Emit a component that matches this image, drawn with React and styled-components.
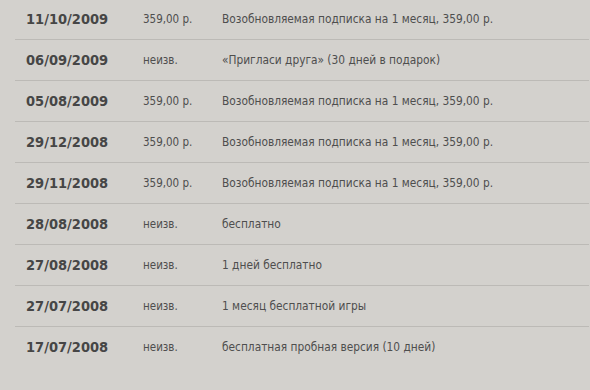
import React from "react";
import styled, { createGlobalStyle } from "styled-components";

const Global = createGlobalStyle`
  html, body { margin: 0; padding: 0; background: #d3d1cd; }
  body { font-family: "DejaVu Sans Condensed", "DejaVu Sans", sans-serif; }
`;

const List = styled.div`
  margin: -1px 1px 0 15px;
`;

const Row = styled.div`
  display: grid;
  grid-template-columns: 117px 79px 1fr;
  align-items: center;
  height: 40px;
  padding-left: 11px;
  border-bottom: 1px solid ${(p) => (p.$last ? "transparent" : "#bcbab6")};
`;

const DateCell = styled.div`
  font-weight: bold;
  font-size: 14.5px;
  color: #464646;
`;

const Price = styled.div`
  font-size: 11.5px;
  color: #4e4e4e;
`;

const Desc = styled.div`
  font-size: 11.8px;
  color: #4e4e4e;
`;

const rows = [
  ["11/10/2009", "359,00 р.", "Возобновляемая подписка на 1 месяц, 359,00 р."],
  ["06/09/2009", "неизв.", "«Пригласи друга» (30 дней в подарок)"],
  ["05/08/2009", "359,00 р.", "Возобновляемая подписка на 1 месяц, 359,00 р."],
  ["29/12/2008", "359,00 р.", "Возобновляемая подписка на 1 месяц, 359,00 р."],
  ["29/11/2008", "359,00 р.", "Возобновляемая подписка на 1 месяц, 359,00 р."],
  ["28/08/2008", "неизв.", "бесплатно"],
  ["27/08/2008", "неизв.", "1 дней бесплатно"],
  ["27/07/2008", "неизв.", "1 месяц бесплатной игры"],
  ["17/07/2008", "неизв.", "бесплатная пробная версия (10 дней)"],
];

export default function App() {
  return (
    <>
      <Global />
      <List>
        {rows.map(([d, p, t], i) => (
          <Row key={i} $last={i === rows.length - 1}>
            <DateCell>{d}</DateCell>
            <Price>{p}</Price>
            <Desc>{t}</Desc>
          </Row>
        ))}
      </List>
    </>
  );
}
